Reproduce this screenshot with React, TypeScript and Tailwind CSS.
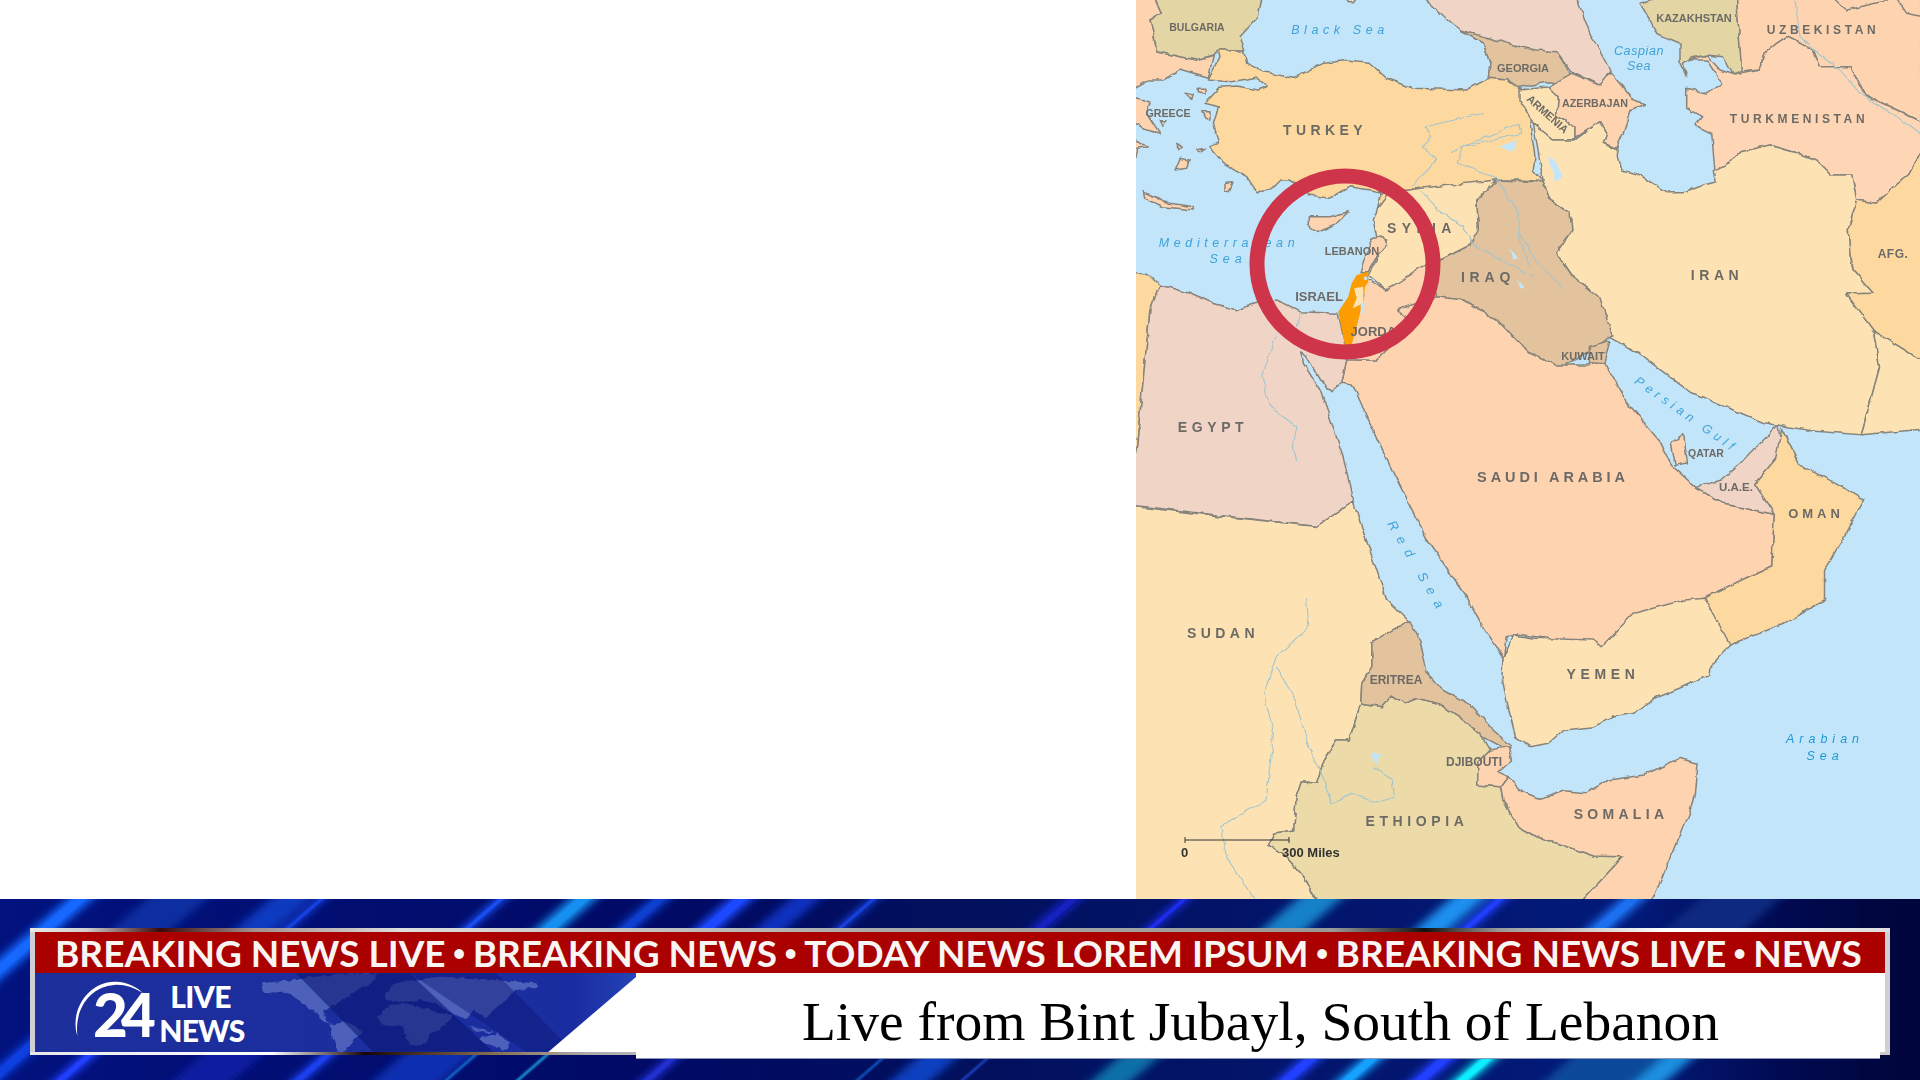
const conv = (ox: number, oy: number, sx: number, sy: number) => (s: string) =>
  s
    .trim()
    .split(/\s+/)
    .map((p) => {
      const [x, y] = p.split(",").map(Number);
      return `${(ox + x * sx).toFixed(1)},${(oy + y * sy).toFixed(1)}`;
    })
    .join(" ");

const z0 = conv(0, 0, 1.2245, 1.2245);
const z1 = conv(1130, 0, 1 / 3, 1 / 3);
const z2 = conv(1520, 0, 1 / 3, 1 / 3);
const z3 = conv(1130, 160, 1 / 3, 1 / 3);
const z6 = conv(1130, 600, 0.504, 1 / 3);

const ORANGE = "#fdd9a0";
const CREAM = "#fde3b4";
const PEACH = "#fed3b0";
const PINK = "#f0d4c6";
const TAN = "#e3c39d";
const OLIVE = "#e3d5a4";
const ETH = "#ecdba8";
const SEA = "#c2e5fa";

const lands: [string, string][] = [
  // Balkans and Greece
  [PEACH, z1("10,-5 75,-5 95,40 60,60 70,95 80,155 200,180 250,165 235,235 150,210 100,240 55,240 10,265")],
  [OLIVE, z1("75,-5 95,40 60,60 70,95 80,155 200,180 250,165 270,150 345,150 330,110 385,50 395,-5")],
  [PEACH, z1("10,290 60,310 50,340 90,400 50,390 10,370")],
  [PEACH, z1("10,420 55,440 20,445 10,500")],
  [PEACH, z1("40,575 120,610 190,620 190,630 100,620 45,595")],
  [PEACH, z1("285,550 310,548 298,575 285,572")],
  [PEACH, z1("165,280 190,285 185,295 170,290")],
  [PEACH, z1("205,265 225,265 225,280 205,275")],
  [PEACH, z1("215,335 240,335 240,360 225,355")],
  [PEACH, z1("140,430 160,445 150,450")],
  [PEACH, z1("200,450 228,445 210,458")],
  [PEACH, z1("135,510 150,475 178,480 170,505")],
  [PEACH, z1("88,362 108,362 95,376")],
  // Russia, Georgia
  [PINK, z1("880,-5 990,90 1060,130 1080,190 1075,235 1130,240 1200,250") + " " + z2("110,155 155,215 240,255 270,210 210,100 170,-5")],
  [TAN, z1("990,90 1060,130 1080,190 1075,235 1130,240 1200,300") + " " + z2("0,262 90,245 170,262 150,220 110,155 50,150 0,140")],
  [PINK, z1("650,-5 680,-5 670,8 655,8")],
  // Turkey
  [ORANGE, z1("225,310 270,262 320,258 385,270 415,258 380,232 300,245 235,240 270,170 265,150 340,150 350,190 400,215 490,235 580,190 640,182 720,190 770,235 850,265 1010,270 1075,235 1130,240 1170,265 1200,300") + " " + z2("30,370 45,470 40,510 70,545 0,540") + " " + z1("1100,540 1000,570 870,565 840,570 745,575 720,570 660,560 600,595 540,585 530,570 480,540 450,540 420,570 380,575 350,530 280,490 240,440 265,430 250,370 265,320")],
  // Armenia, Azerbaijan
  [CREAM, z2("0,270 90,260 115,290 110,345 165,380 165,420 100,420 40,370 0,300")],
  [PEACH, z2("85,260 155,220 240,255 270,215 340,300 375,312 330,330 310,400 290,445 250,430 260,400 240,365 165,415 165,380 110,345 115,290")],
  // Central Asia
  [OLIVE, z2("360,10 410,-5 650,-5 665,215 640,225 610,170 560,165 510,175 490,190 500,230 480,190 480,130 410,100 390,60")],
  [PEACH, z2("650,-5 1205,-5 1205,365 1035,285 990,200 900,200 880,150 800,110 770,130 735,160 720,210 665,215")],
  [PEACH, z2("940,-5 980,30 1130,-5 1160,40 1205,50 1205,-5")],
  ["#fed6b5", z2("510,180 560,180 605,250 560,280 500,265 500,325 545,350 525,375 575,400 585,515 630,490 660,455 750,435 850,465 890,480 935,525 995,525 1010,600 1065,610 1170,520 1205,450 1205,365 1035,285 990,200 900,200 880,150 800,110 770,130 735,160 720,210 645,225 600,210 560,165")],
  // Iran
  [CREAM, z2("40,370 100,420 165,420 240,365 260,400 250,430 290,450 305,510 360,525 440,575 490,575 585,545 580,515 630,490 660,455 750,435 850,465 890,480 935,525 995,525 1010,600 985,690 990,760 1000,810 1060,880") + " " + z0("1508,240 1530,270 1535,300 1520,355 1480,352 1440,345 1380,320 1340,290 1315,275 1300,270") + " " + z2("240,895 160,830 110,760 155,690 150,640 90,600 70,545")],
  [ORANGE, z2("1205,450 1170,520 1065,610 1010,600 985,690 990,760 1000,810 1060,880") + " " + z0("1508,240 1530,270 1575,298 1575,120")],
  [CREAM, z0("1530,270 1575,298 1575,350 1520,355 1535,300")],
  // Iraq, Syria, Lebanon, Jordan
  [TAN, "1497,180 1543,182 1550,200 1570,213 1572,230 1557,253 1573,277 1600,298 1612,335 1590,352 1560,368 1530,353 1497,320 1463,300 1437,297 1427,267 1470,245 1478,230 1477,200"],
  [CREAM, z3("750,100 780,100 870,85 1100,60 1040,120 1045,210 1020,255 890,320 770,390 715,345 745,290 770,240 740,230 730,180 745,140")],
  [PEACH, z3("730,235 760,230 770,255 740,290 715,335 690,335 705,290")],
  [ORANGE, z3("750,100 780,100 745,145")],
  // Saudi Arabia
  [PEACH, z3("650,600 680,600 740,600 790,550 850,490 795,455 850,430 920,410 1000,420 1100,480 1200,580") + " " + z0("1270,298 1298,298 1310,295 1330,330 1355,360 1365,380 1385,398 1410,412 1449,420 1447,462 1392,488 1340,505 1310,530 1290,525 1240,518 1230,520 1227,545") + " " + z6("740,175 700,80 670,-5") + " " + z0("1165,440 1130,370 1105,315") + " " + z3("635,670")],
  [PEACH, z3("700,350 770,390 890,310 920,410 800,450 850,490 790,550 740,600 680,600 660,555 690,450")],
  [TAN, z0("1298,283 1315,278 1310,295 1298,298")],
  [PEACH, z0("1365,362 1375,355 1378,378 1368,380")],
  [PINK, z0("1385,398 1405,392 1425,375 1452,347 1455,365 1450,375 1433,395 1449,420 1410,412")],
  [ORANGE, z0("1392,488 1447,462 1449,420 1433,395 1450,375 1455,350 1470,380 1500,395 1522,408 1505,440 1490,465 1490,490 1455,510 1410,528")],
  [CREAM, z6("740,175 760,105 800,115 920,120 935,140 1000,40 1100,0 1140,-5 1190,135 1155,190 1150,225 1090,265 1040,295 1000,340 960,350 920,380 860,390 830,430 795,440 765,410 750,320 738,230")],
  // Cyprus
  [PEACH, z3("535,170 600,170 655,155 620,190 560,215 535,195")],
  // Libya, Egypt
  [ORANGE, z3("0,335 60,345 90,375 60,450 20,860 0,870")],
  [PINK, z3("90,375 180,400 250,430 320,450 380,430 440,420 510,455 625,460 645,555 650,600 635,670 605,695 590,690 530,590 515,575 520,610 570,690 640,890") + " " + z0("1105,410 1075,430 928,413 920,413") + " " + z3("20,860 60,450")],
  // Horn of Africa, Sudan
  [CREAM, z0("920,413 1075,430 1105,410") + " " + z6("510,0 555,65 510,100 480,125 480,200 460,250 458,310 435,420 410,420 385,480 370,550 340,545 330,590 325,690 285,700 275,735 310,770 345,830 370,905 -20,905 -20,300")],
  [ETH, z6("458,310 500,320 520,285 545,310 570,295 610,310 650,350 700,410 715,450 690,490 690,555 735,560 740,600 770,680 800,705 920,768 978,770 895,905 370,905 345,830 310,770 275,735 285,700 325,690 330,590 340,545 370,550 385,480 410,420 435,420")],
  [TAN, z6("555,65 510,100 480,125 480,200 460,250 458,310 500,320 520,285 545,310 570,295 610,310 650,350 700,410 750,450 755,435 720,390 680,320 620,270 590,220 575,120")],
  [PEACH, z6("690,490 715,450 750,440 757,480 730,515 750,530 735,560 690,555")],
  [PEACH, z6("735,560 750,530 780,575 815,598 860,572 905,578 950,540 1020,525 1090,475 1125,490 1120,580 1110,640 1080,750 1035,905 895,905 978,770 920,768 800,705 770,680 740,600")],
];

const rivers = [
  z1("885,380 1060,340"),
  z1("885,380 905,410 880,440 920,480 870,530 850,560"),
  z1("960,455 1170,370 1175,400 1000,440 985,490 1090,530 1110,540"),
  z3("875,90 920,145 1000,200 1025,250 1190,340 1210,350"),
  z3("1100,60 1160,150 1170,240 1200,320"),
  z3("510,460 505,500"),
  z3("440,520 395,650 420,740 500,800 490,860 500,900"),
  z6("350,-5 355,80 290,170 265,280 285,400 270,600 210,650 180,680 195,780 250,905"),
  z6("290,200 325,290 355,440 380,520 400,610 440,580 490,610 525,590 520,540 485,500"),
  z2("825,0 840,110 900,165 960,210 1020,280 1205,400"),
  z2("0,700 40,770 130,870"),
];

const lakes = [
  z1("1110,440 1165,420 1145,455"),
  z2("85,470 105,480 130,535 105,545"),
  z3("1140,262 1165,300 1150,300"),
  z3("1165,360 1185,385 1170,385"),
  z6("475,460 497,458 490,495"),
];

type L = [string, number, number, number, number, number?, string?];
const GREY = "#6d6b66";
const labels: L[] = [
  ["BULGARIA", 1197, 31, 10.5, 0],
  ["GEORGIA", 1523, 72, 11, 0],
  ["GREECE", 1168, 117, 10.7, 0],
  ["TURKEY", 1325, 135, 14, 4.4],
  ["SYRIA", 1422, 233, 14, 5.4],
  ["LEBANON", 1352, 255, 11, 0],
  ["ISRAEL", 1319, 301, 13, 0],
  ["JORDAN", 1378, 336, 13, 0],
  ["IRAQ", 1488, 282, 14, 4.8],
  ["ARMENIA", 1545, 117, 11, 0, 42],
  ["AZERBAJAN", 1595, 107, 10.7, 0],
  ["KAZAKHSTAN", 1694, 22, 11, 0],
  ["UZBEKISTAN", 1823, 34, 12, 3.6],
  ["TURKMENISTAN", 1799, 123, 12, 3.6],
  ["IRAN", 1717, 280, 14, 4.6],
  ["AFG.", 1893, 258, 12, 0.5],
  ["EGYPT", 1213, 432, 14, 4.6],
  ["KUWAIT", 1583, 360, 11, 0],
  ["QATAR", 1706, 457, 10.5, 0],
  ["U.A.E.", 1736, 491, 11.5, 0],
  ["OMAN", 1816, 518, 13, 4],
  ["SAUDI ARABIA", 1553, 482, 14.5, 3.9],
  ["SUDAN", 1223, 638, 14, 4.4],
  ["ERITREA", 1396, 684, 12, 0],
  ["YEMEN", 1603, 679, 14, 4.6],
  ["DJIBOUTI", 1474, 766, 12, 0],
  ["ETHIOPIA", 1417, 826, 14, 4.6],
  ["SOMALIA", 1621, 819, 14, 4.3],
];
const BLUE = "#3fa2d8";
const seaLabels: L[] = [
  ["Black Sea", 1340, 34, 12.5, 4.6],
  ["Mediterranean", 1229, 247, 12.5, 4.6],
  ["Sea", 1228, 263, 12.5, 5],
  ["Caspian", 1639, 55, 12.5, 0.6],
  ["Sea", 1639, 70, 12.5, 0.6],
  ["Persian Gulf", 1684, 418, 12.5, 4.5, 35],
  ["Red Sea", 1414, 570, 13, 8, 60],
  ["Arabian", 1825, 743, 12.5, 5],
  ["Sea", 1825, 760, 12.5, 5],
];

function MapPanel() {
  return (
    <svg className="block w-[784px] h-[899px] shrink-0" viewBox="1136 0 784 899" fontFamily="'Liberation Sans', sans-serif">
      <defs>
        <filter id="rough" x="-2%" y="-2%" width="104%" height="104%">
          <feTurbulence type="fractalNoise" baseFrequency="0.09" numOctaves="2" seed="4" result="n" />
          <feDisplacementMap in="SourceGraphic" in2="n" scale="5" xChannelSelector="R" yChannelSelector="G" />
          <feGaussianBlur stdDeviation="0.45" />
        </filter>
        <filter id="softText" x="-5%" y="-5%" width="110%" height="110%">
          <feGaussianBlur stdDeviation="0.3" />
        </filter>
      </defs>
      <rect x="1136" y="0" width="784" height="899" fill={SEA} />
      <g filter="url(#rough)">
        <g stroke="#86847c" strokeWidth="1.5" strokeLinejoin="round">
          {lands.map(([c, p], i) => (
            <polygon key={i} points={p} fill={c} />
          ))}
          <polygon points={z3("672,385 700,380 700,430 668,445 680,415")} fill={CREAM} strokeWidth="0.6" />
        </g>
        <g fill="none" stroke="#a4c5cd" strokeWidth="1.1" strokeLinejoin="round">
          {rivers.map((p, i) => (
            <polyline key={i} points={p} />
          ))}
        </g>
        {lakes.map((p, i) => (
          <polygon key={i} points={p} fill={SEA} />
        ))}
      </g>
      <polygon points={z3("680,345 715,335 715,365 705,380 700,430 690,460 665,555 645,555 625,455 655,410 665,370")} fill="#fb9c00" />
      <polygon points={z3("672,385 700,380 700,430 668,445 680,415")} fill={CREAM} />
      <polygon points={z3("692,430 705,430 700,460 692,460")} fill={SEA} />
      <polygon points={z3("702,350 712,350 710,360 703,360")} fill={SEA} />
      <g filter="url(#softText)">
        <g fontWeight="700" fill={GREY} textAnchor="middle">
          {labels.map(([t, x, y, fs, ls, r]) => (
            <text key={t} x={x} y={y} fontSize={fs} letterSpacing={ls} transform={r ? `rotate(${r} ${x} ${y})` : undefined}>
              {t}
            </text>
          ))}
        </g>
        <g fontStyle="italic" fill={BLUE} textAnchor="middle">
          {seaLabels.map(([t, x, y, fs, ls, r], i) => (
            <text key={i} x={x} y={y} fontSize={fs} letterSpacing={ls} transform={r ? `rotate(${r} ${x} ${y})` : undefined} fill={i > 6 ? "#1f9ad6" : BLUE}>
              {t}
            </text>
          ))}
        </g>
        <path d="M1185 840H1289M1185 837V843M1289 837V843" stroke="#333" strokeWidth="1" fill="none" />
        <g fill="#333" fontSize="13" fontWeight="700">
          <text x="1181" y="857">0</text>
          <text x="1282" y="857">300 Miles</text>
        </g>
      </g>
      <circle cx="1345" cy="264" r="88" fill="none" stroke="#cf354a" strokeWidth="15" />
    </svg>
  );
}

type S = [number, number, string];
const topStreaks: S[] = [
  [67, 26, "#1268ff"],
  [147, 60, "#0a2fa0"],
  [270, 40, "#0a3ac0"],
  [318, 7, "#1f4fff"],
  [496, 10, "#1f55ff"],
  [570, 26, "#1590f0"],
  [650, 20, "#1040d0"],
  [729, 24, "#1a4aff"],
  [790, 30, "#1030c0"],
  [870, 7, "#1f4fff"],
  [1064, 18, "#1520c0"],
  [1180, 9, "#2030ff"],
  [1297, 44, "#1580c8"],
  [1450, 34, "#1a90f0"],
  [1493, 14, "#2040ff"],
  [1621, 24, "#1a70f0"],
  [1700, 80, "#0a2a80"],
];
const botStreaks: S[] = [
  [8, 20, "#1040e0"],
  [80, 14, "#2040ff"],
  [200, 60, "#0a1fa0"],
  [318, 14, "#1a40f0"],
  [400, 70, "#0a2fb0"],
  [471, 4, "#25a0ff"],
  [542, 5, "#25c8ff"],
  [667, 14, "#2030d0"],
  [882, 4, "#2080ff"],
  [918, 40, "#1040c0"],
  [987, 4, "#3060ff"],
  [1119, 40, "#1070a8"],
  [1303, 20, "#2040ff"],
  [1364, 20, "#15a0ff"],
  [1437, 20, "#2040ff"],
  [1480, 18, "#10f0ff"],
  [1572, 100, "#0a4a9a"],
  [1664, 30, "#1a90e0"],
];

function BannerBackdrop() {
  const band = (x: number, w: number, yRef: number, y0: number, y1: number) => {
    const a = x + (yRef - y0) * 1.15;
    const b = x - (y1 - yRef) * 1.15;
    return `${a},${y0} ${a + w},${y0} ${b + w},${y1} ${b},${y1}`;
  };
  return (
    <svg className="absolute inset-0 w-full h-full" viewBox="0 899 1920 181" preserveAspectRatio="none">
      <defs>
        <linearGradient id="bannerBase" x1="0" y1="0" x2="1" y2="0">
          <stop offset="0" stopColor="#02127e" />
          <stop offset="0.35" stopColor="#010a64" />
          <stop offset="0.5" stopColor="#02105c" />
          <stop offset="0.85" stopColor="#031a7a" />
          <stop offset="0.93" stopColor="#010a50" />
          <stop offset="1" stopColor="#00053c" />
        </linearGradient>
        <filter id="soft" x="-5%" y="-20%" width="110%" height="140%">
          <feGaussianBlur stdDeviation="4" />
        </filter>
        <filter id="softSmall" x="-5%" y="-20%" width="110%" height="140%">
          <feGaussianBlur stdDeviation="1" />
        </filter>
        <clipPath id="topBand">
          <rect x="0" y="899" width="1920" height="100" />
        </clipPath>
        <clipPath id="botBand">
          <rect x="0" y="999" width="1920" height="81" />
        </clipPath>
      </defs>
      <rect x="0" y="899" width="1920" height="181" fill="url(#bannerBase)" />
      <g clipPath="url(#topBand)">
        <g filter="url(#soft)">
          {topStreaks.map(([x, w, c], i) => (
            <polygon key={i} points={band(x, w, 899, 880, 1010)} fill={c} />
          ))}
        </g>
        <g filter="url(#softSmall)">
          {topStreaks.filter((s) => s[1] < 30).map(([x, w, c], i) => (
            <polygon key={i} points={band(x + w * 0.25, w * 0.5, 899, 880, 1010)} fill={c} />
          ))}
        </g>
      </g>
      <g clipPath="url(#botBand)">
        <g filter="url(#soft)">
          {botStreaks.filter((s) => s[1] > 8).map(([x, w, c], i) => (
            <polygon key={i} points={band(x, w, 1057, 990, 1095)} fill={c} />
          ))}
        </g>
        <g filter="url(#softSmall)">
          {botStreaks.filter((s) => s[1] < 30).map(([x, w, c], i) => (
            <polygon key={i} points={band(x + w * 0.2, w * 0.6, 1057, 990, 1095)} fill={c} />
          ))}
        </g>
      </g>
      <rect x="1860" y="899" width="60" height="181" fill="#00053c" opacity="0.5" />
    </svg>
  );
}

function BluePanelArt() {
  return (
    <svg className="block w-full h-full" viewBox="36 973 600 79" fontFamily="Lato, 'Liberation Sans', sans-serif">
      <defs>
        <linearGradient id="panelBlue" x1="0" y1="0" x2="1" y2="0">
          <stop offset="0" stopColor="#1d2f9b" />
          <stop offset="0.9" stopColor="#1a2da0" />
          <stop offset="1" stopColor="#2344b8" />
        </linearGradient>
        <filter id="mapRough" x="-5%" y="-5%" width="110%" height="110%">
          <feTurbulence type="fractalNoise" baseFrequency="0.05" numOctaves="2" seed="7" result="n" />
          <feDisplacementMap in="SourceGraphic" in2="n" scale="14" xChannelSelector="R" yChannelSelector="G" />
        </filter>
      </defs>
      <rect x="36" y="973" width="600" height="79" fill="url(#panelBlue)" />
      <g transform="translate(240 970) scale(0.3333)">
        <g fill="#4e60ba" filter="url(#mapRough)">
          <polygon points="65,40 160,30 180,25 280,15 400,10 410,25 360,55 320,85 290,100 250,125 270,160 250,150 220,120 190,100 150,70 70,65" />
          <polygon points="330,10 410,10 385,50 340,45" />
          <polygon points="270,165 320,155 370,185 350,205 320,240 295,245 280,205" />
          <polygon points="415,140 450,105 500,100 560,115 600,130 640,135 600,180 570,190 545,225 510,225 485,170 430,165" />
          <polygon points="435,75 470,40 520,30 600,20 700,25 890,40 895,50 830,60 800,90 760,120 740,145 700,120 680,150 650,135 620,120 590,100 540,90 490,95 440,90" />
          <polygon points="720,205 770,190 810,215 800,240 740,225" />
          <polygon points="690,170 760,185 750,190 700,180" />
          <polygon points="555,190 570,195 560,220 550,215" />
        </g>
        <polygon points="170,10 510,10 760,245 400,245" fill="#0a1470" opacity="0.55" />
        <polygon points="510,10 770,10 1000,245 860,245" fill="#0a1470" opacity="0.4" />
      </g>
      <g transform="translate(20 960) scale(0.3333)" fill="#ffffff">
        <path d="M175 228C150 150 210 62 290 65C325 66 355 82 372 100C340 80 310 72 285 75C215 80 165 145 175 228Z" />
      </g>
      <g fill="#ffffff" fontWeight="900">
        <text x="94" y="1037" fontSize="60" letterSpacing="-7">24</text>
        <text x="171" y="1008" fontSize="30" letterSpacing="-0.6">LIVE</text>
        <text x="160" y="1042" fontSize="30" letterSpacing="-0.8">NEWS</text>
      </g>
    </svg>
  );
}

const tickerParts = ["BREAKING NEWS LIVE", "•", "BREAKING NEWS", "•", "TODAY NEWS LOREM IPSUM", "•", "BREAKING NEWS LIVE", "•", "NEWS"];

export default function App() {
  return (
    <div className="w-[1920px] h-[1080px] flex flex-col overflow-hidden bg-white">
      <div className="flex h-[899px] shrink-0">
        <div className="w-[1136px] shrink-0 bg-white" />
        <MapPanel />
      </div>
      <div className="relative h-[181px] shrink-0 pt-[29px] pl-[30px]">
        <BannerBackdrop />
        <div className="relative flex flex-col w-[1860px] h-[127px] bg-[#cfd0d6]">
          <div className="h-[4px] shrink-0 bg-[linear-gradient(90deg,#e8e8e8_0%,#cfcfcf_3%,#3a0a0a_7%,#a09090_12%,#dddddd_20%,#aaaaaa_45%,#999999_70%,#111111_75%,#999999_79%,#ffffff_88%,#dddddd_100%)]" />
          <div className="flex flex-col flex-1 pl-[5px] pr-[5px]">
            <div className="flex items-center justify-between h-[41px] shrink-0 bg-[#ab0000] pl-[20px] pr-[23px] font-['Lato','Liberation_Sans',sans-serif] font-bold text-[37px] leading-none text-[#f8f5f2]">
              {tickerParts.map((t, i) => (
                <span key={i} className={t === "•" ? "whitespace-nowrap text-[22px]" : "whitespace-nowrap"}>{t}</span>
              ))}
            </div>
            <div className="flex flex-1">
              <div className="relative w-[601px] shrink-0">
                <BluePanelArt />
                <div className="absolute inset-0 bg-white [clip-path:polygon(100%_4px,100%_100%,513px_100%)]" />
              </div>
              <div className="relative flex-1 flex items-center justify-center bg-white pt-[18px]">
                <span className="font-['Liberation_Serif',serif] text-[55.5px] leading-none text-black whitespace-nowrap">
                  Live from Bint Jubayl, South of Lebanon
                </span>
                <div className="absolute left-0 right-[5px] -bottom-[7px] h-[7px] bg-white border-b border-[#8a96b8]" />
              </div>
            </div>
          </div>
          <div className="h-[3px] shrink-0 bg-[linear-gradient(90deg,#e8e8e8_0%,#ffffff_13%,#1a0505_18%,#8a7050_25%,#aaaaaa_30%,#bbbbbb_34%,#cccccc_100%)]" />
        </div>
      </div>
    </div>
  );
}
